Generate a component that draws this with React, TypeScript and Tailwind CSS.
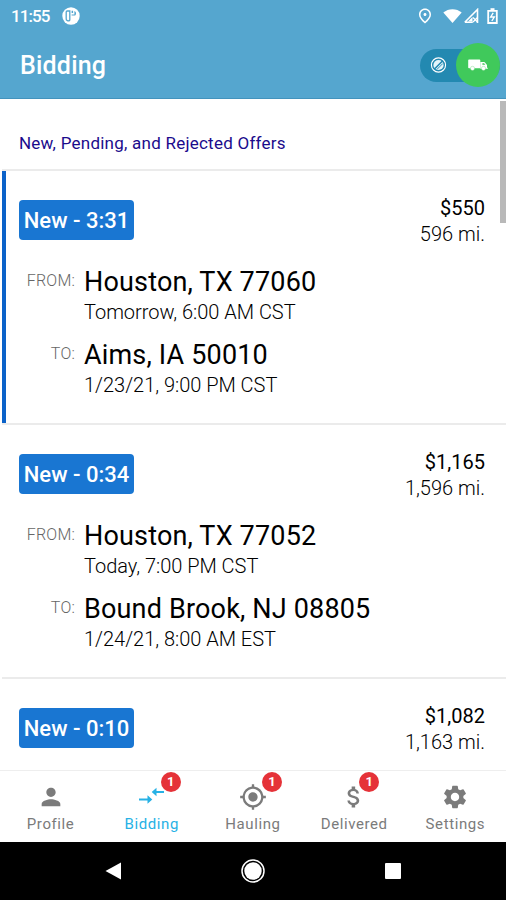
import { MdAttachMoney, MdGpsFixed, MdOutlinePlace, MdPerson, MdSettings } from "react-icons/md";
import clsx from "clsx";

const offers = [
  {
    id: 1,
    timer: "3:31",
    price: "$550",
    miles: "596 mi.",
    from: "Houston, TX 77060",
    pickup: "Tomorrow, 6:00 AM CST",
    to: "Aims, IA 50010",
    dropoff: "1/23/21, 9:00 PM CST",
    selected: true,
  },
  {
    id: 2,
    timer: "0:34",
    price: "$1,165",
    miles: "1,596 mi.",
    from: "Houston, TX 77052",
    pickup: "Today, 7:00 PM CST",
    to: "Bound Brook, NJ 08805",
    dropoff: "1/24/21, 8:00 AM EST",
  },
  { id: 3, timer: "0:10", price: "$1,082", miles: "1,163 mi." },
];

type Offer = (typeof offers)[number];

function StatusBar() {
  return (
    <div className="flex h-8 items-center pr-2 pl-[11px] text-white">
      <span className="w-[38px] text-[17px] leading-8 font-medium tracking-[-0.9px]">11:55</span>
      <svg className="ml-[13px] h-[18px] w-[18px]" viewBox="0 0 18 18">
        <circle cx="9" cy="9" r="8.7" fill="#fff" />
        <path d="M7.8 4H5.2a1 1 0 0 0-1 1v6.500a2 2 0 0 0 3.600 1.500z" fill="none" stroke="#55a6cf" strokeWidth="1.300" />
        <path d="M9.600 3.800h1.500v2.200H9.600zM12.400 4a2.800 2.800 0 0 1 .8 4.600H9.600V7.400h2.800z" fill="#55a6cf" />
      </svg>
      <div className="ml-auto flex items-center">
        <MdOutlinePlace className="h-[18px] w-[18px]" />
        <svg className="ml-[9px] h-4 w-[19px]" viewBox="0 0 19 16" fill="#fff">
          <path d="M.300 4.600C5.400.100 13.600.100 18.700 4.600L9.500 15z" />
        </svg>
        <svg className="ml-[1px] h-4 w-[17px]" viewBox="0 0 17 16" fill="none" stroke="#fff">
          <path d="M1.800 14.200 14.500 1.500V15M1.800 14.200h8" strokeWidth="1.600" />
          <path d="M5 13.500 9.500 9v4.500z" fill="#fff" stroke="none" />
          <path d="m10 9.500 4.500 4.500m0-4.500L10 14" strokeWidth="1.300" />
        </svg>
        <svg className="ml-[7px] h-4 w-[11px]" viewBox="0 0 11 16" fill="none" stroke="#fff">
          <path d="M1.200 2.800h8.600V15H1.200z" strokeWidth="1.800" />
          <path d="M3.500 1.200h4" strokeWidth="2" />
          <path d="M6.200 4.800 3.700 9h3.600l-2.500 4" strokeWidth="1.400" />
        </svg>
      </div>
    </div>
  );
}

function AvailabilityToggle() {
  return (
    <div className="flex h-[33px] w-[80px] items-center rounded-full bg-[#2389b1] pl-[10px]">
      <svg className="h-[18px] w-[18px]" viewBox="0 0 18 18" fill="none" stroke="#fff">
        <circle cx="9" cy="9" r="7.500" strokeWidth="1.200" />
        <circle cx="9" cy="9" r="5.400" fill="#e4f5fb" stroke="none" />
        <path d="M4.500 13.500 13.500 4.500" stroke="#2389b1" strokeWidth="1.600" />
        <path d="M7.500 13.500 13.500 7.500" stroke="#2389b1" strokeWidth="1" />
      </svg>
      <div className="ml-[9px] flex h-[44px] w-[44px] shrink-0 items-center justify-center rounded-full bg-[#40c95b]">
        <svg className="h-3 w-5" viewBox="0 0 20 12" fill="#fff">
          <path d="M1 .500h10.500a.8.8 0 0 1 .8.8v8H1a.8.8 0 0 1-.8-.8V1.300A.8.8 0 0 1 1 .500z" />
          <path d="M12.300 3h3.900a1 1 0 0 1 .8.400l2 2.500v2.800h.8v1h-7.500zM14.400 4.200v1.600h3L16 4.200z" fillRule="evenodd" />
          <circle cx="4.500" cy="9.400" r="2.100" stroke="#40c95b" strokeWidth=".3" />
          <circle cx="15.500" cy="9.400" r="2.100" stroke="#40c95b" strokeWidth=".3" />
        </svg>
      </div>
    </div>
  );
}

function Stop({ label, place, time }: { label: string; place?: string; time?: string }) {
  return (
    <div className="flex h-[73px]">
      <span className="w-[75px] shrink-0 pt-[5px] text-right text-[16px] leading-[23px] font-light tracking-[0.2px] text-[#666]">
        {label}
      </span>
      <div className="pl-[9px] whitespace-nowrap">
        <div className="pt-px text-[27px] leading-[34px] tracking-[0.17px] text-black">{place}</div>
        <div className="text-[20px] leading-[27px] font-light tracking-[-0.02px] text-black">{time}</div>
      </div>
    </div>
  );
}

function OfferCard({ offer }: { offer: Offer }) {
  return (
    <div className="relative ml-[2px] h-[254px] shrink-0 border-t-2 border-[#ebebeb]">
      {offer.selected && <div className="absolute top-0 left-0 h-[252px] w-[4px] bg-[#0b62c9]" />}
      <div className="-ml-[2px]">
        <div className="flex h-[93px] justify-between pr-[21px] pl-[19px]">
          <span className="mt-[29px] flex h-10 w-[115px] items-center justify-center rounded-[4px] bg-[#1976d2] pt-px text-[22px] font-medium text-white">
            New - {offer.timer}
          </span>
          <div className="pt-[24px] text-right text-[20px] leading-[26px] text-black">
            <div>{offer.price}</div>
            <div className="font-light">{offer.miles}</div>
          </div>
        </div>
        {offer.from && (
          <>
            <Stop label="FROM:" place={offer.from} time={offer.pickup} />
            <Stop label="TO:" place={offer.to} time={offer.dropoff} />
          </>
        )}
      </div>
    </div>
  );
}

function BidArrows({ className }: { className?: string }) {
  return (
    <svg className={className} viewBox="0 0 28 28" fill="currentColor">
      <path d="M1 15.500h8.500v-3.200l4.800 4.200-4.800 4.200v-3.200H1z" />
      <path d="M26 8h-7.500V4.800L13.700 9l4.800 4.200V10H26z" />
    </svg>
  );
}

const tabs = [
  { name: "Profile", icon: MdPerson },
  { name: "Bidding", icon: BidArrows, badge: 1, active: true },
  { name: "Hauling", icon: MdGpsFixed, badge: 1 },
  { name: "Delivered", icon: MdAttachMoney, badge: 1, narrow: true },
  { name: "Settings", icon: MdSettings },
];

function TabBar() {
  return (
    <nav className="grid h-[72px] shrink-0 grid-cols-5 border-t border-[#eee] bg-white">
      {tabs.map(({ name, icon: Icon, badge, active, narrow }) => (
        <div
          key={name}
          className={clsx("flex flex-col items-center pt-[12px]", active ? "text-[#27b1e5]" : "text-[#7b7b7b]")}
        >
          <div className="relative">
            <Icon className="h-7 w-7" />
            {badge && (
              <span
                className={clsx(
                  "absolute -top-[11px] flex h-5 w-5 items-center justify-center rounded-full bg-[#e53238] text-[13px] font-bold text-white",
                  narrow ? "left-[19px]" : "left-[23px]"
                )}
              >
                {badge}
              </span>
            )}
          </div>
          <span className="mt-[2px] text-[15px] leading-[22px] tracking-[0.6px]">{name}</span>
        </div>
      ))}
    </nav>
  );
}

function SystemNav() {
  return (
    <div className="flex h-[58px] shrink-0 items-center justify-center gap-[116px] bg-black">
      <svg className="h-6 w-6" viewBox="0 0 24 24" fill="#fff">
        <path d="M4.500 12 20 3.500v17z" />
      </svg>
      <svg className="h-6 w-6" viewBox="0 0 24 24">
        <circle cx="12" cy="12" r="11" fill="none" stroke="#fff" strokeWidth="1.500" />
        <circle cx="12" cy="12" r="8.700" fill="#fff" />
      </svg>
      <svg className="h-6 w-6" viewBox="0 0 24 24" fill="#fff">
        <rect x="4" y="4" width="16" height="16" rx="1" />
      </svg>
    </div>
  );
}

export default function App() {
  return (
    <div className="flex h-[900px] w-[506px] flex-col overflow-hidden bg-white font-[Roboto,sans-serif]">
      <header className="h-[99px] shrink-0 border-b border-[#4393bd] bg-[#55a6cf]">
        <StatusBar />
        <div className="flex h-[66px] items-center justify-between pr-[6px] pl-[20px]">
          <h1 className="pt-[2px] text-[25px] font-medium tracking-[0.2px] text-white">Bidding</h1>
          <AvailabilityToggle />
        </div>
      </header>
      <main className="relative flex min-h-0 flex-1 flex-col overflow-hidden">
        <div className="h-[70px] shrink-0 pt-[32px] pl-[19px] text-[17px] leading-[24px] tracking-[0.24px] text-[#1b0b8c]">
          New, Pending, and Rejected Offers
        </div>
        {offers.map((offer) => (
          <OfferCard key={offer.id} offer={offer} />
        ))}
        <div className="absolute top-[2px] right-0 h-[122px] w-[6px] bg-[#b9b9b9]" />
      </main>
      <TabBar />
      <SystemNav />
    </div>
  );
}
